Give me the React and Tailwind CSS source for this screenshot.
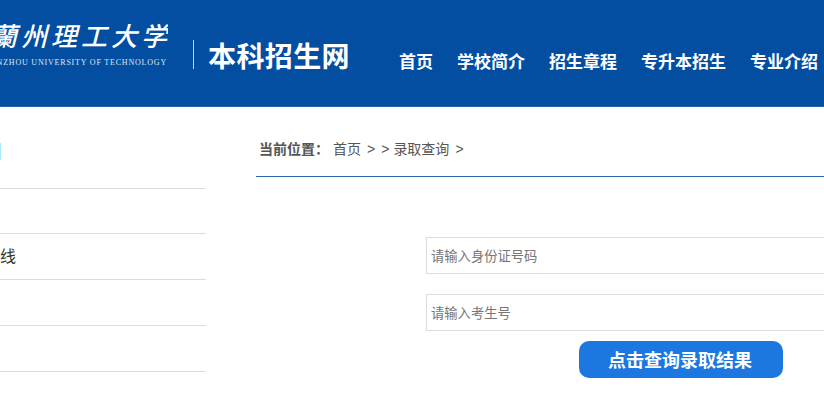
const cjk = { fontFamily: '"Noto Sans CJK SC", sans-serif' }
const crumb = { fontFamily: '"Liberation Sans", "Noto Sans CJK SC", sans-serif' }

const navItems = ['首页', '学校简介', '招生章程', '专升本招生', '专业介绍']

function Header() {
  return (
    <div className="flex h-[107px] w-full overflow-hidden bg-[#034ea1] border-b border-[#1d62ad]">
      <div className="w-[168px] shrink-0 pt-[15px] overflow-hidden flex flex-col items-end">
        <div className="whitespace-nowrap text-[26px] leading-[40px] font-medium text-white italic tracking-[4px] -mr-[3px]" style={cjk}>
          蘭州理工大学
        </div>
        <div className="mt-[2px] mr-[1px] whitespace-nowrap text-[8px] leading-[12px] tracking-[0.8px] text-[#dfe8f3] font-['Liberation_Serif',serif]">
          LANZHOU UNIVERSITY OF TECHNOLOGY
        </div>
      </div>
      <div className="ml-[25px] mt-[40px] h-[29px] w-px bg-[#c4d4e8]" />
      <div className="ml-[14px] mt-[34px] h-[42px] text-[28px] leading-[42px] font-bold tracking-[0.4px] text-white whitespace-nowrap" style={cjk}>
        本科招生网
      </div>
      <div className="ml-[49px] mt-[48px] flex gap-[24px] text-[17px] leading-[26px] font-bold text-white whitespace-nowrap" style={cjk}>
        {navItems.map(item => (
          <span key={item}>{item}</span>
        ))}
      </div>
    </div>
  )
}

function Sidebar() {
  return (
    <div className="w-[206px] shrink-0">
      <div className="h-[82px] border-b border-[#dcdcdc] pt-[36px]">
        <div className="h-[17px] w-[1px] bg-[#a6ecff]" />
      </div>
      <div className="h-[45px] border-b border-[#dcdcdc]" />
      <div className="h-[46px] border-b border-[#dcdcdc] flex items-center pb-[4px]">
        <span className="w-[16px] text-[16px] text-[#333333]" style={cjk}>线</span>
      </div>
      <div className="h-[46px] border-b border-[#dcdcdc]" />
      <div className="h-[46px] border-b border-[#dcdcdc]" />
    </div>
  )
}

function Content() {
  return (
    <div className="ml-[50px] w-[620px] shrink-0">
      <div className="h-[70px] border-b border-[#2b69a6] pl-[3px] pt-[33px] text-[14px] leading-[19px] text-[#555555] whitespace-pre" style={crumb}>
        <span className="font-bold">当前位置：</span>
        <span className="ml-[4px]">首页</span>
        <span className="ml-[6px]">&gt;</span>
        <span className="ml-[6px]">&gt;</span>
        <span className="ml-[4px]">录取查询</span>
        <span className="ml-[6px]">&gt;</span>
      </div>
      <div className="ml-[170px] mt-[60px] flex flex-col">
        <input
          className="h-[37px] w-[450px] border border-[#dcdcdc] pl-[4px] pb-[1px] text-[13.3px] outline-none placeholder:text-[#757575]"
          style={cjk}
          placeholder="请输入身份证号码"
        />
        <input
          className="mt-[20px] h-[37px] w-[450px] border border-[#dcdcdc] pl-[4px] pb-[1px] text-[13.3px] outline-none placeholder:text-[#757575]"
          style={cjk}
          placeholder="请输入考生号"
        />
        <button
          className="ml-[153px] mt-[10px] h-[37px] w-[204px] rounded-[10px] bg-[#1c77e0] pr-[2px] text-[18px] font-bold text-white"
          style={cjk}
        >
          点击查询录取结果
        </button>
      </div>
    </div>
  )
}

export default function App() {
  return (
    <div className="h-[416px] w-[824px] overflow-hidden bg-white">
      <Header />
      <div className="flex">
        <Sidebar />
        <Content />
      </div>
    </div>
  )
}
